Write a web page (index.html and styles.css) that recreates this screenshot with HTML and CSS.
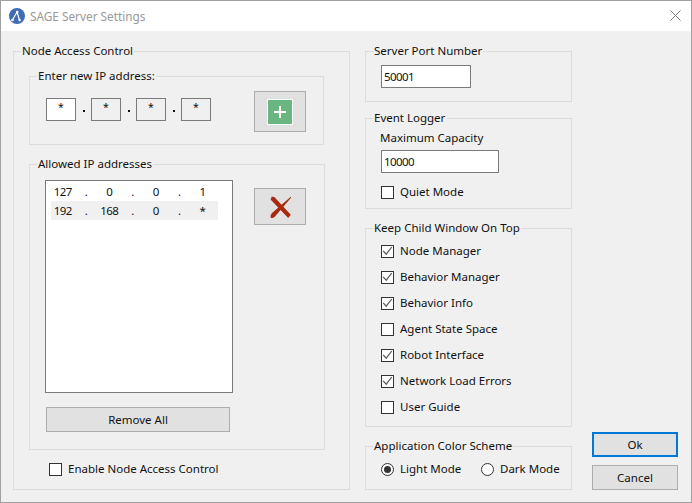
FILE: index.html
```html
<!DOCTYPE html>
<html lang="en">
<head>
<meta charset="utf-8">
<title>SAGE Server Settings</title>
<link rel="stylesheet" href="styles.css">
</head>
<body>
<div class="window">
  <header class="titlebar">
    <svg class="logo" width="16" height="16" viewBox="0 0 16 16"><circle cx="8" cy="8" r="8" fill="#3f6cb5"/><path d="M3.5 12 8 4l2.5 8" fill="none" stroke="#fff" stroke-width="1.2"/><circle cx="3.5" cy="12" r="1.3" fill="#fff"/><circle cx="8.3" cy="4" r="1.2" fill="#fff"/><circle cx="10.6" cy="12" r="1.2" fill="#fff"/></svg>
    <span class="title">SAGE Server Settings</span>
    <svg class="close" width="11" height="11" viewBox="0 0 11 11"><path d="M.5.5l10 10M10.5.5l-10 10" stroke="#7a7a7a" stroke-width="1" fill="none"/></svg>
  </header>
  <main class="content">
    <fieldset class="group node">
      <legend>Node Access Control</legend>
      <fieldset class="group enter">
        <legend>Enter new IP address:</legend>
        <div class="enter-row">
          <div class="ip">
            <input class="field octet first" value="*">
            <span class="dot"></span>
            <input class="field octet" value="*">
            <span class="dot"></span>
            <input class="field octet" value="*">
            <span class="dot"></span>
            <input class="field octet" value="*">
          </div>
          <button class="btn add"><span class="plus"><svg width="14" height="14" viewBox="0 0 14 14"><path d="M7 1v12M1 7h12" stroke="#fff" stroke-width="2"/></svg></span></button>
        </div>
      </fieldset>
      <fieldset class="group allowed">
        <legend>Allowed IP addresses</legend>
        <div class="allowed-row">
          <div class="allowed-col">
            <div class="list">
              <div class="row"><span>127</span><span>.</span><span>0</span><span>.</span><span>0</span><span>.</span><span>1</span></div>
              <div class="row alt"><span>192</span><span>.</span><span>168</span><span>.</span><span>0</span><span>.</span><span>*</span></div>
            </div>
            <button class="btn remove-all">Remove All</button>
          </div>
          <button class="btn del"><svg width="24" height="24" viewBox="0 0 24 24"><path d="M3.8 1.6 6.6 2.2 22.8 19.8 20.2 23 2.6 4.6Z" fill="#a82a10"/><path d="M22.8 1.8 23.2 2.6 7 21.5Q4.4 24 2.6 22.6 1.6 20.6 4 18Z" fill="#a82a10"/></svg></button>
        </div>
      </fieldset>
      <label class="check enable"><span class="box"></span>Enable Node Access Control</label>
    </fieldset>

    <div class="right">
      <fieldset class="group port">
        <legend>Server Port Number</legend>
        <input class="field number port-input" value="50001">
      </fieldset>
      <fieldset class="group logger">
        <legend>Event Logger</legend>
        <div class="cap-label">Maximum Capacity</div>
        <input class="field number cap-input" value="10000">
        <label class="check quiet"><span class="box"></span>Quiet Mode</label>
      </fieldset>
      <fieldset class="group ontop">
        <legend>Keep Child Window On Top</legend>
        <label class="check"><span class="box"><svg width="11" height="11" viewBox="0 0 11 11"><path d="M1.2 4.8 4.2 8.2 9.8 1" fill="none" stroke="#5a5a5a" stroke-width="1.2"/></svg></span>Node Manager</label>
        <label class="check"><span class="box"><svg width="11" height="11" viewBox="0 0 11 11"><path d="M1.2 4.8 4.2 8.2 9.8 1" fill="none" stroke="#5a5a5a" stroke-width="1.2"/></svg></span>Behavior Manager</label>
        <label class="check"><span class="box"><svg width="11" height="11" viewBox="0 0 11 11"><path d="M1.2 4.8 4.2 8.2 9.8 1" fill="none" stroke="#5a5a5a" stroke-width="1.2"/></svg></span>Behavior Info</label>
        <label class="check"><span class="box"></span>Agent State Space</label>
        <label class="check"><span class="box"><svg width="11" height="11" viewBox="0 0 11 11"><path d="M1.2 4.8 4.2 8.2 9.8 1" fill="none" stroke="#5a5a5a" stroke-width="1.2"/></svg></span>Robot Interface</label>
        <label class="check"><span class="box"><svg width="11" height="11" viewBox="0 0 11 11"><path d="M1.2 4.8 4.2 8.2 9.8 1" fill="none" stroke="#5a5a5a" stroke-width="1.2"/></svg></span>Network Load Errors</label>
        <label class="check"><span class="box"></span>User Guide</label>
      </fieldset>
      <fieldset class="group scheme">
        <legend>Application Color Scheme</legend>
        <div class="scheme-row">
          <label class="check light"><span class="box radio on"></span>Light Mode</label>
          <label class="check"><span class="box radio"></span>Dark Mode</label>
        </div>
      </fieldset>
    </div>

    <div class="actions">
      <button class="btn action ok">Ok</button>
      <button class="btn action">Cancel</button>
    </div>
  </main>
</div>
</body>
</html>
```
FILE: styles.css
```css
* { box-sizing: border-box; }
html, body { margin: 0; padding: 0; }
body {
  width: 692px;
  height: 503px;
  font: 11.5px/16px "Noto Sans", "Open Sans", sans-serif;
  color: #111;
  overflow: hidden;
}
.window {
  width: 692px;
  height: 503px;
  border: 1px solid #a0a0a0;
  background: #f0f0f0;
  display: flex;
  flex-direction: column;
}
.titlebar {
  height: 30px;
  background: #fff;
  display: flex;
  align-items: center;
  padding: 0 10px 0 8px;
}
.logo { margin-right: 5px; }
.title { color: #999; flex: 1; font-size: 11.8px; }
.close { margin-top: -1px; }
.content {
  flex: 1;
  display: flex;
  padding: 12px 13px 12px 12px;
  align-items: flex-start;
}
.group {
  margin: 0;
  min-width: 0;
  border: 1px solid #dcdcdc;
  padding: 0;
}
.group legend {
  padding: 0 1px;
  margin-left: -8px;
  line-height: 16px;
  white-space: nowrap;
}
.node {
  width: 337px;
  padding: 9px 0 11px 15px;
  margin-right: 15px;
}
.enter {
  width: 295px;
  padding: 7px 17px 12px 16px;
}
.group.enter legend { margin-left: -9px; }
.enter-row { display: flex; justify-content: space-between; align-items: flex-start; }
.ip { display: flex; margin-top: 7px; }
.field {
  height: 23px;
  border: 1px solid #7a7a7a;
  background: #fff;
  font: inherit;
  color: inherit;
  padding: 0 2px;
  outline: none;
  display: block;
}
.number { letter-spacing: -0.6px; }
.octet {
  width: 30px;
  text-align: center;
  background: #f0f0f0;
  padding-bottom: 5px;
  font-size: 10.5px;
}
.octet.first { background: #fff; }
.dot {
  width: 2px;
  height: 2px;
  background: #111;
  margin: 12px 6px 0 7px;
}
.btn {
  border: 1px solid #adadad;
  background: #e1e1e1;
  font: inherit;
  color: inherit;
  padding: 0;
  display: flex;
  align-items: center;
  justify-content: center;
}
.add { width: 52px; height: 41px; }
.plus {
  width: 26px;
  height: 26px;
  background: #6bb583;
  border: 1px solid #fff;
  display: flex;
  align-items: center;
  justify-content: center;
}
.allowed {
  width: 296px;
  margin-top: 11px;
  padding: 8px 0 17px 15px;
}
.allowed-row { display: flex; align-items: flex-start; }
.allowed-col { width: 188px; margin-right: 21px; }
.list {
  height: 213px;
  border: 1px solid #7a7a7a;
  background: #fff;
  padding: 1px 0 0 5px;
}
.row {
  width: 167px;
  height: 19px;
  display: grid;
  grid-template-columns: repeat(7, 23.3px);
  line-height: 19px;
  text-align: center;
  letter-spacing: -0.6px;
}
.row.alt { background: #f0f0f0; }
.del { width: 52px; height: 37px; margin-top: 8px; }
.remove-all { width: 184px; height: 25px; margin: 14px 0 0 1px; }
.check {
  display: flex;
  align-items: center;
  height: 18px;
  white-space: nowrap;
}
.box {
  width: 13px;
  height: 13px;
  border: 1px solid #333;
  background: #fff;
  margin-right: 6px;
  flex: none;
  display: block;
}
.box svg { display: block; }
.radio { border-radius: 50%; position: relative; }
.radio.on::after {
  content: "";
  position: absolute;
  left: 2px;
  top: 2px;
  width: 7px;
  height: 7px;
  border-radius: 50%;
  background: #333;
}
.enable { margin: 10px 0 0 20px; }
.right { width: 207px; margin-right: 20px; }
.port { padding: 6px 0 13px 15px; }
.port-input { width: 90px; }
.logger { margin-top: 8px; padding: 4px 0 7px 15px; }
.cap-label { margin-left: -1px; }
.cap-input { width: 118px; margin-top: 4px; }
.quiet { margin-top: 10px; }
.ontop {
  margin-top: 11px;
  padding: 6px 0 10px 15px;
}
.ontop .check + .check { margin-top: 8px; }
.scheme { margin-top: 11px; padding: 6px 0 11px 15px; }
.scheme-row { display: flex; }
.light { width: 100px; }
.actions {
  width: 86px;
  align-self: flex-end;
  display: flex;
  flex-direction: column;
  gap: 8px;
}
.action { height: 25px; }
.ok { border: 2px solid #0078d7; }
```
